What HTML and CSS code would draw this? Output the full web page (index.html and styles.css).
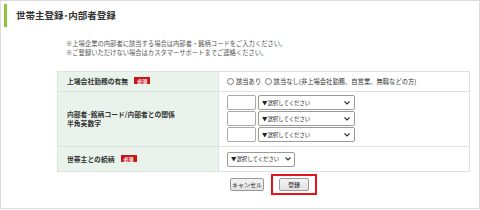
FILE: index.html
```html
<!DOCTYPE html>
<html lang="ja">
  <head>
    <meta charset="UTF-8" />
    <title>世帯主登録・内部者登録</title>
    <link rel="stylesheet" href="styles.css">
  </head>
  <body>
    <div class="panel">
      <h1 class="ttl">世帯主登録･内部者登録</h1>
      <div class="notes">
        <p>※上場企業の内部者に該当する場合は内部者・銘柄コードをご入力ください。</p>
        <p>※ご登録いただけない場合はカスタマーサポートまでご連絡ください。</p>
      </div>

      <div class="form-wrap">
        <table class="form-table">
          <tr class="row-1">
            <th>上場会社勤務の有無<span class="req">必須</span></th>
            <td>
              <span class="radio"></span>該当あり
              <span class="radio"></span>該当なし(非上場会社勤務、自営業、無職などの方)
            </td>
          </tr>
          <tr class="row-2">
            <th>内部者･銘柄コード/内部者との関係<br />半角英数字</th>
            <td>
              <div class="line"><span class="code"></span><div class="sel wide"><span>▼選択してください</span><svg width="6" height="4" viewBox="0 0 6 4"><path d="M0.5 0.5 L3 3 L5.5 0.5" fill="none" stroke="#333" stroke-width="1.2"/></svg></div></div>
              <div class="line"><span class="code"></span><div class="sel wide"><span>▼選択してください</span><svg width="6" height="4" viewBox="0 0 6 4"><path d="M0.5 0.5 L3 3 L5.5 0.5" fill="none" stroke="#333" stroke-width="1.2"/></svg></div></div>
              <div class="line"><span class="code"></span><div class="sel wide"><span>▼選択してください</span><svg width="6" height="4" viewBox="0 0 6 4"><path d="M0.5 0.5 L3 3 L5.5 0.5" fill="none" stroke="#333" stroke-width="1.2"/></svg></div></div>
            </td>
          </tr>
          <tr class="row-3">
            <th>世帯主との続柄<span class="req">必須</span></th>
            <td>
              <div class="sel short"><span>▼選択してください</span><svg width="6" height="4" viewBox="0 0 6 4"><path d="M0.5 0.5 L3 3 L5.5 0.5" fill="none" stroke="#333" stroke-width="1.2"/></svg></div>
            </td>
          </tr>
        </table>

        <div class="buttons">
          <button class="btn cancel">キャンセル</button>
          <span class="mark"><button class="btn submit">登録</button></span>
        </div>
      </div>
    </div>
  </body>
</html>
```

FILE: styles.css
```css
body {
  margin: 0;
  font-family: "Noto Sans CJK JP", "Noto Sans", sans-serif;
  color: #333;
  background: #fff;
}
.panel {
  width: 480px;
  height: 209px;
  box-sizing: border-box;
  border: 1px solid #dcdcdc;
  padding: 3px 9px 0 3px;
}
.ttl {
  margin: 0;
  height: 23px;
  border-left: 3px solid #8cc63f;
  padding-left: 9px;
  font-size: 9.5px;
  font-weight: bold;
  line-height: 23px;
  color: #333;
}
.notes {
  margin: 12px 0 0 62px;
  font-size: 6.3px;
  line-height: 9px;
  color: #555;
}
.notes p {
  margin: 0;
}
.form-wrap {
  margin: 14px 0 0 53px;
  width: 413px;
}
.form-table {
  width: 413px;
  border-collapse: collapse;
}
.form-table th,
.form-table td {
  border: 1px solid #dde3de;
  padding: 0;
  vertical-align: middle;
}
.form-table th {
  width: 151px;
  background: #e9f3eb;
  text-align: left;
  padding-left: 9px;
  font-size: 6.8px;
  font-weight: bold;
  line-height: 9px;
  color: #333;
}
.form-table td {
  padding-left: 8px;
  font-size: 6.3px;
  color: #333;
}
.row-1 {
  height: 20px;
}
.row-2 {
  height: 55px;
}
.row-3 {
  height: 25px;
}
.req {
  display: inline-block;
  margin-left: 6px;
  padding: 0 3px;
  height: 7px;
  line-height: 7px;
  background: #c8161d;
  color: #fff;
  font-size: 5px;
  vertical-align: 1px;
}
.radio {
  display: inline-block;
  width: 5px;
  height: 5px;
  border: 1px solid #777;
  border-radius: 50%;
  margin-right: 2px;
  vertical-align: -1px;
}
.form-table td .radio:nth-of-type(2) {
  margin-left: 2px;
}
.line {
  display: flex;
  gap: 2px;
  height: 16px;
  align-items: flex-start;
}
.code {
  width: 29px;
  height: 15px;
  box-sizing: border-box;
  border: 1px solid #aaa;
  border-radius: 2px;
  background: #fff;
}
.sel {
  display: flex;
  align-items: center;
  justify-content: space-between;
  height: 15px;
  box-sizing: border-box;
  border: 1px solid #999;
  border-radius: 2px;
  padding: 0 4px 0 3px;
  font-size: 5.4px;
  white-space: nowrap;
  background: #fff;
  color: #222;
}
.sel.wide {
  width: 97px;
}
.sel.short {
  width: 68px;
  padding-right: 3px;
}
.buttons {
  display: flex;
  justify-content: center;
  align-items: center;
  gap: 7px;
  margin-top: 2px;
  padding-left: 20px;
}
.btn {
  height: 13px;
  box-sizing: border-box;
  border: 1px solid #999;
  border-radius: 2px;
  background: linear-gradient(#f4f4f4, #e2e2e2);
  font-family: "Noto Sans CJK JP", sans-serif;
  font-size: 6px;
  color: #222;
  padding: 0;
  line-height: 11px;
}
.cancel {
  width: 34px;
}
.submit {
  width: 30px;
  display: block;
}
.mark {
  display: inline-block;
  border: 2px solid #e8141c;
  padding: 2px 6px;
}
```
